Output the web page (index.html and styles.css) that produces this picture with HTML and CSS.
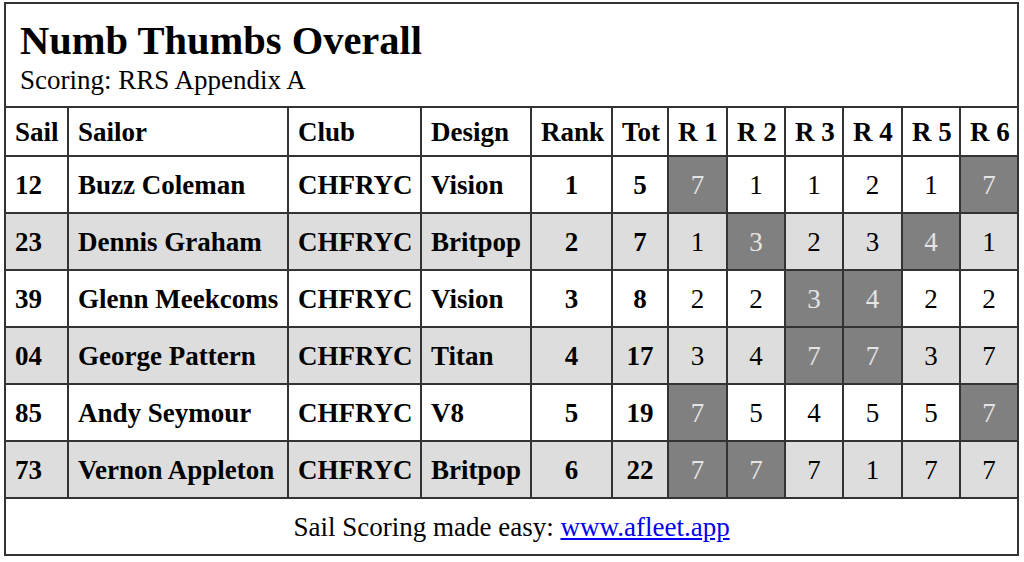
FILE: index.html
```html
<!DOCTYPE html>
<html>
<head>
<meta charset="utf-8">
<link rel="stylesheet" href="styles.css">
</head>
<body>
<table class="results">
  <colgroup>
    <col class="c-sail"><col class="c-sailor"><col class="c-club"><col class="c-design"><col class="c-rank"><col class="c-tot">
    <col class="c-r1"><col class="c-r"><col class="c-r"><col class="c-r1"><col class="c-r"><col class="c-r">
  </colgroup>
  <tr class="title-row">
    <td colspan="12" class="title-cell">
      <div class="title">Numb Thumbs Overall</div>
      <div class="subtitle">Scoring: RRS Appendix A</div>
    </td>
  </tr>
  <tr class="head">
    <th class="l">Sail</th><th class="l">Sailor</th><th class="l">Club</th><th class="l">Design</th><th>Rank</th><th>Tot</th>
    <th>R 1</th><th>R 2</th><th>R 3</th><th>R 4</th><th>R 5</th><th>R 6</th>
  </tr>
  <tr class="row">
    <td class="b">12</td><td class="b">Buzz Coleman</td><td class="b">CHFRYC</td><td class="b">Vision</td><td class="b c">1</td><td class="b c">5</td>
    <td class="c d">7</td><td class="c">1</td><td class="c">1</td><td class="c">2</td><td class="c">1</td><td class="c d">7</td>
  </tr>
  <tr class="row alt">
    <td class="b">23</td><td class="b">Dennis Graham</td><td class="b">CHFRYC</td><td class="b">Britpop</td><td class="b c">2</td><td class="b c">7</td>
    <td class="c">1</td><td class="c d">3</td><td class="c">2</td><td class="c">3</td><td class="c d">4</td><td class="c">1</td>
  </tr>
  <tr class="row">
    <td class="b">39</td><td class="b">Glenn Meekcoms</td><td class="b">CHFRYC</td><td class="b">Vision</td><td class="b c">3</td><td class="b c">8</td>
    <td class="c">2</td><td class="c">2</td><td class="c d">3</td><td class="c d">4</td><td class="c">2</td><td class="c">2</td>
  </tr>
  <tr class="row alt">
    <td class="b">04</td><td class="b">George Pattern</td><td class="b">CHFRYC</td><td class="b">Titan</td><td class="b c">4</td><td class="b c">17</td>
    <td class="c">3</td><td class="c">4</td><td class="c d">7</td><td class="c d">7</td><td class="c">3</td><td class="c">7</td>
  </tr>
  <tr class="row">
    <td class="b">85</td><td class="b">Andy Seymour</td><td class="b">CHFRYC</td><td class="b">V8</td><td class="b c">5</td><td class="b c">19</td>
    <td class="c d">7</td><td class="c">5</td><td class="c">4</td><td class="c">5</td><td class="c">5</td><td class="c d">7</td>
  </tr>
  <tr class="row alt">
    <td class="b">73</td><td class="b">Vernon Appleton</td><td class="b">CHFRYC</td><td class="b">Britpop</td><td class="b c">6</td><td class="b c">22</td>
    <td class="c d">7</td><td class="c d">7</td><td class="c">7</td><td class="c">1</td><td class="c">7</td><td class="c">7</td>
  </tr>
  <tr class="foot">
    <td colspan="12" class="foot-cell">Sail Scoring made easy: <a href="#">www.afleet.app</a></td>
  </tr>
</table>
</body>
</html>
```
FILE: styles.css
```css
html, body {
  background: #fff;
}
body {
  margin: 2px 0 0 4px;
  font-family: "Liberation Serif", "Times New Roman", serif;
  font-size: 27px;
  color: #000;
}
.results {
  border-collapse: collapse;
  table-layout: fixed;
  width: 1015px;
}
.results td, .results th {
  border: 2px solid #333;
  padding: 13px 9px 11px;
  line-height: 31px;
  white-space: nowrap;
}
.c-sail { width: 63px; }
.c-sailor { width: 220px; }
.c-club { width: 133px; }
.c-design { width: 110px; }
.c-rank { width: 81px; }
.c-tot { width: 56px; }
.c-r { width: 58px; }
.c-r1 { width: 59px; }

.title-cell {
  padding: 13px 12px 10px 14px !important;
}
.title {
  font-size: 40.5px;
  font-weight: bold;
  line-height: 48px;
}
.subtitle {
  font-size: 27px;
  line-height: 31px;
}
.head th {
  padding: 9px 9px 7px;
  font-weight: bold;
  text-align: center;
}
.head th.l {
  text-align: left;
}
.b {
  font-weight: bold;
}
.c {
  text-align: center;
}
.row td {
  background: #fff;
}
.row.alt td {
  background: #dddddd;
}
.row td.d {
  background: #808080;
  color: #e4e4e4;
}
.foot-cell {
  text-align: center;
}
.foot-cell a {
  color: #0000ee;
  text-decoration: underline;
}
```
